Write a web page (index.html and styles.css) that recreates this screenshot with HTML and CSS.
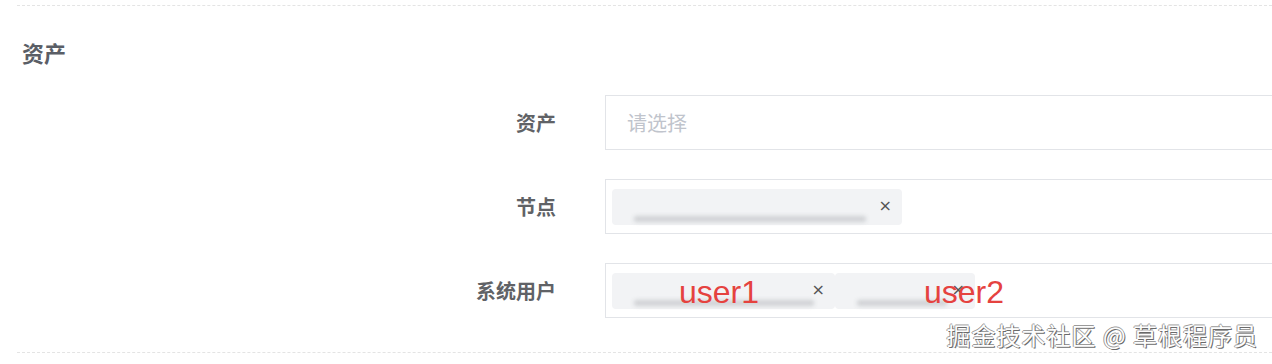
FILE: index.html
```html
<!DOCTYPE html>
<html lang="zh">
<head>
<meta charset="utf-8">
<link rel="stylesheet" href="styles.css">
</head>
<body>
<div class="page">
  <section class="section">
    <h3 class="section-title">资产</h3>
    <div class="form">
      <div class="row">
        <label class="label">资产</label>
        <div class="field"><span class="placeholder">请选择</span></div>
      </div>
      <div class="row">
        <label class="label">节点</label>
        <div class="field">
          <span class="tag tag-node"><span class="blur-text w-node"></span><span class="close">×</span></span>
        </div>
      </div>
      <div class="row">
        <label class="label">系统用户</label>
        <div class="field">
          <span class="tag tag-u1"><span class="blur-text w-u1"></span><span class="close">×</span><span class="note note-1">user1</span></span>
          <span class="tag tag-u2"><span class="blur-text w-u2"></span><span class="close">×</span><span class="note note-2">user2</span></span>
        </div>
      </div>
    </div>
  </section>
  <div class="watermark">掘金技术社区 @ 草根程序员</div>
</div>
</body>
</html>
```
FILE: styles.css
```css
html, body {
  margin: 0;
  padding: 0;
  background: #fff;
  overflow: hidden;
}
body {
  width: 1272px;
  height: 364px;
  font-family: "Noto Sans CJK SC", "Noto Sans", sans-serif;
}
.page {
  position: relative;
  height: 364px;
  padding: 5px 0 0 17px;
  box-sizing: border-box;
}
.section {
  border-top: 1px dashed #e4e4e4;
  border-bottom: 1px dashed #e4e4e4;
  height: 348px;
  box-sizing: border-box;
  padding: 31px 0 0 5px;
}
.section-title {
  margin: 0;
  font-size: 22px;
  line-height: 30px;
  font-weight: 700;
  color: #5a5e66;
}
.form {
  margin-top: 28px;
  display: flex;
  flex-direction: column;
  gap: 29px;
}
.row {
  display: flex;
  align-items: center;
  gap: 49px;
}
.label {
  flex-shrink: 0;
  width: 534px;
  text-align: right;
  font-size: 20px;
  font-weight: 700;
  color: #606266;
  margin-top: -1px;
}
.field {
  flex: 1 1 auto;
  min-width: 0;
  height: 55px;
  border: 1px solid #e2e4e8;
  border-right: none;
  box-sizing: border-box;
  display: flex;
  align-items: center;
  padding-left: 6px;
}
.placeholder {
  margin-left: 15px;
  font-size: 20px;
  color: #c0c4cc;
}
.tag {
  flex-shrink: 0;
  position: relative;
  height: 36px;
  background: #f2f3f5;
  border-radius: 4px;
  display: flex;
  align-items: center;
  box-sizing: border-box;
}
.tag-node { width: 290px; }
.tag-u1 { width: 223px; }
.tag-u2 { width: 140px; }
.blur-text {
  height: 6px;
  margin-top: 24px;
  margin-left: 22px;
  background: #cfd1d4;
  filter: blur(2px);
  border-radius: 2px;
}
.w-node { width: 232px; }
.w-u1 { width: 180px; }
.w-u2 { width: 90px; }
.close {
  position: absolute;
  right: 10px;
  top: 7px;
  font-family: "DejaVu Sans", sans-serif;
  font-size: 16px;
  line-height: 20px;
  color: #555;
}
.note {
  position: absolute;
  top: 1px;
  font-family: "Liberation Sans", Arial, sans-serif;
  font-size: 32px;
  line-height: 36px;
  color: #e5423f;
}
.note-1 { left: 67px; }
.note-2 { left: 89px; }
.watermark {
  position: absolute;
  right: 14px;
  top: 318px;
  font-size: 24px;
  line-height: 34px;
  color: #fdfdfd;
  text-shadow: 1px 1px 0 #6a6a6a, -1px 0 0 #9a9a9a, 0 -1px 0 #9a9a9a;
  letter-spacing: 1px;
}
```
